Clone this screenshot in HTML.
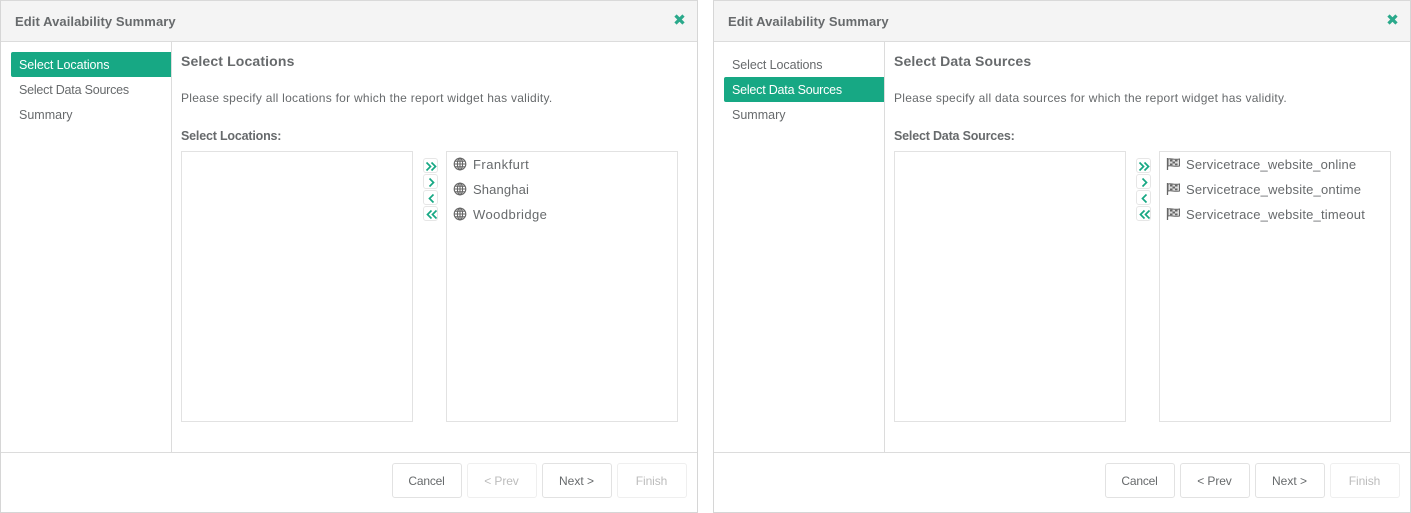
<!DOCTYPE html>
<html><head><meta charset="utf-8"><style>
html,body{margin:0;padding:0;background:#fff}
body{width:1411px;height:513px;position:relative;overflow:hidden;font-family:"Liberation Sans",sans-serif;color:#676a6c}
.d{position:absolute;top:0;width:698px;height:513px;box-sizing:border-box;border:1px solid #d6d6d6;border-top-color:#d9d9d9;background:#fff;overflow:hidden}
.a{position:absolute;white-space:nowrap;line-height:16px}
.hd{left:0;top:0;width:696px;height:40px;background:#f4f4f4;border-bottom:1px solid #dcdcdc}
.t{left:14px;top:12px;font-size:13px;font-weight:bold;color:#676a6c;letter-spacing:.08px;margin-top:1px}
.side{left:170px;top:41px;width:1px;height:410px;background:#dcdcdc}
.foot{left:0;top:451px;width:696px;height:1px;background:#dcdcdc}
.nav{left:10px;width:160px;height:25px;line-height:27px;font-size:12.5px;box-sizing:border-box;padding-left:8px;border-radius:2px 0 0 2px}
.on{background:#17a884;color:#fff}
.h{left:180px;top:52px;font-size:14px;font-weight:bold;letter-spacing:.14px}
.p{left:180px;top:89px;font-size:12px;letter-spacing:.27px}
.l{left:180px;top:127px;font-size:12.5px;font-weight:bold;letter-spacing:-.19px}
.box{top:150px;width:232px;height:271px;box-sizing:border-box;border:1px solid #e2e2e2;background:#fff}
.sb{left:422px;width:15px;height:15px;box-sizing:border-box;border:1px solid #e6e6e6;border-radius:3px;background:#fff}
.sb svg{position:absolute;left:.5px;top:1px}
.it{left:472px;font-size:13px}
.ic{left:452px}
.b{top:462px;width:70px;height:35px;box-sizing:border-box;border:1px solid #e2e2e2;border-radius:3px;text-align:center;line-height:34px;font-size:12px;color:#676a6c;background:#fff;text-indent:-1px}
.dis{color:#bcbcbc;border-color:#efefef}
</style></head><body>

<div class="d" style="left:0">
<div class="a hd"></div><div class="a t">Edit Availability Summary</div>
<svg class="a" style="left:672px;top:11.500px" width="13" height="13" viewBox="0 0 13 13"><path d="M2.500 2.500L10.500 10.500M10.500 2.500L2.500 10.500" stroke="#2aa98b" stroke-width="3.200"/></svg>
<div class="a side"></div><div class="a foot"></div>
<div class="a nav on" style="top:51px;letter-spacing:-.08px">Select Locations</div>
<div class="a nav" style="top:76px;letter-spacing:-.21px">Select Data Sources</div>
<div class="a nav" style="top:101px">Summary</div>
<div class="a h">Select Locations</div>
<div class="a p">Please specify all locations for which the report widget has validity.</div>
<div class="a l">Select Locations:</div>
<div class="a box" style="left:180px"></div>
<div class="a box" style="left:445px"></div>
<div class="a sb" style="top:157px"><svg width="13" height="13" viewBox="0 0 13 13"><path d="M1.500 2.500L5.500 6.500L1.500 10.500M6.500 2.500L10.500 6.500L6.500 10.500" fill="none" stroke="#17a884" stroke-width="1.700"/></svg></div>
<div class="a sb" style="top:173px"><svg width="13" height="13" viewBox="0 0 13 13"><path d="M4.500 2.500L8.500 6.500L4.500 10.500" fill="none" stroke="#17a884" stroke-width="1.700"/></svg></div>
<div class="a sb" style="top:189px"><svg width="13" height="13" viewBox="0 0 13 13"><path d="M8.500 2.500L4.500 6.500L8.500 10.500" fill="none" stroke="#17a884" stroke-width="1.700"/></svg></div>
<div class="a sb" style="top:205px"><svg width="13" height="13" viewBox="0 0 13 13"><path d="M6.500 2.500L2.500 6.500L6.500 10.500M11.500 2.500L7.500 6.500L11.500 10.500" fill="none" stroke="#17a884" stroke-width="1.700"/></svg></div>
<svg class="a ic" style="top:156px" width="14" height="14" viewBox="0 0 14 14"><g fill="none" stroke="#666" stroke-width="1.100"><circle cx="7" cy="7" r="5.800"/><ellipse cx="7" cy="7" rx="2.600" ry="5.800"/><path d="M7 1.200V12.800M1.200 7H12.800M2 4.200H12M2 9.800H12"/></g></svg>
<svg class="a ic" style="top:181px" width="14" height="14" viewBox="0 0 14 14"><g fill="none" stroke="#666" stroke-width="1.100"><circle cx="7" cy="7" r="5.800"/><ellipse cx="7" cy="7" rx="2.600" ry="5.800"/><path d="M7 1.200V12.800M1.200 7H12.800M2 4.200H12M2 9.800H12"/></g></svg>
<svg class="a ic" style="top:206px" width="14" height="14" viewBox="0 0 14 14"><g fill="none" stroke="#666" stroke-width="1.100"><circle cx="7" cy="7" r="5.800"/><ellipse cx="7" cy="7" rx="2.600" ry="5.800"/><path d="M7 1.200V12.800M1.200 7H12.800M2 4.200H12M2 9.800H12"/></g></svg>
<div class="a it" style="top:156px;letter-spacing:.47px">Frankfurt</div>
<div class="a it" style="top:181px;letter-spacing:.13px">Shanghai</div>
<div class="a it" style="top:206px;letter-spacing:.45px">Woodbridge</div>
<div class="a b" style="left:391px;letter-spacing:-.2px">Cancel</div>
<div class="a b dis" style="left:466px;letter-spacing:-.1px">&lt; Prev</div>
<div class="a b" style="left:541px">Next &gt;</div>
<div class="a b dis" style="left:616px;letter-spacing:-.1px">Finish</div>
</div>

<div class="d" style="left:713px">
<div class="a hd"></div><div class="a t">Edit Availability Summary</div>
<svg class="a" style="left:672px;top:11.500px" width="13" height="13" viewBox="0 0 13 13"><path d="M2.500 2.500L10.500 10.500M10.500 2.500L2.500 10.500" stroke="#2aa98b" stroke-width="3.200"/></svg>
<div class="a side"></div><div class="a foot"></div>
<div class="a nav" style="top:51px;letter-spacing:-.08px">Select Locations</div>
<div class="a nav on" style="top:76px;letter-spacing:-.21px">Select Data Sources</div>
<div class="a nav" style="top:101px">Summary</div>
<div class="a h">Select Data Sources</div>
<div class="a p" style="letter-spacing:.26px">Please specify all data sources for which the report widget has validity.</div>
<div class="a l">Select Data Sources:</div>
<div class="a box" style="left:180px"></div>
<div class="a box" style="left:445px"></div>
<div class="a sb" style="top:157px"><svg width="13" height="13" viewBox="0 0 13 13"><path d="M1.500 2.500L5.500 6.500L1.500 10.500M6.500 2.500L10.500 6.500L6.500 10.500" fill="none" stroke="#17a884" stroke-width="1.700"/></svg></div>
<div class="a sb" style="top:173px"><svg width="13" height="13" viewBox="0 0 13 13"><path d="M4.500 2.500L8.500 6.500L4.500 10.500" fill="none" stroke="#17a884" stroke-width="1.700"/></svg></div>
<div class="a sb" style="top:189px"><svg width="13" height="13" viewBox="0 0 13 13"><path d="M8.500 2.500L4.500 6.500L8.500 10.500" fill="none" stroke="#17a884" stroke-width="1.700"/></svg></div>
<div class="a sb" style="top:205px"><svg width="13" height="13" viewBox="0 0 13 13"><path d="M6.500 2.500L2.500 6.500L6.500 10.500M11.500 2.500L7.500 6.500L11.500 10.500" fill="none" stroke="#17a884" stroke-width="1.700"/></svg></div>
<svg class="a ic" style="top:156px" width="15" height="14" viewBox="0 0 15 14"><path d="M1.500 1V13" stroke="#666" stroke-width="1.300"/><path d="M2 2C5 .8 8 3.200 13.500 2V9C8 10.200 5 7.800 2 9Z" fill="#ddd" stroke="#666" stroke-width="1"/><path d="M4 2.500H6.500V4.500H9V6.500H11.500V8.300H9V6.500H6.500V4.500H4ZM9 2.800H11.500V4.500H9ZM4 6.500H6.500V8.300H4Z" fill="#666"/></svg>
<svg class="a ic" style="top:181px" width="15" height="14" viewBox="0 0 15 14"><path d="M1.500 1V13" stroke="#666" stroke-width="1.300"/><path d="M2 2C5 .8 8 3.200 13.500 2V9C8 10.200 5 7.800 2 9Z" fill="#ddd" stroke="#666" stroke-width="1"/><path d="M4 2.500H6.500V4.500H9V6.500H11.500V8.300H9V6.500H6.500V4.500H4ZM9 2.800H11.500V4.500H9ZM4 6.500H6.500V8.300H4Z" fill="#666"/></svg>
<svg class="a ic" style="top:206px" width="15" height="14" viewBox="0 0 15 14"><path d="M1.500 1V13" stroke="#666" stroke-width="1.300"/><path d="M2 2C5 .8 8 3.200 13.500 2V9C8 10.200 5 7.800 2 9Z" fill="#ddd" stroke="#666" stroke-width="1"/><path d="M4 2.500H6.500V4.500H9V6.500H11.500V8.300H9V6.500H6.500V4.500H4ZM9 2.800H11.500V4.500H9ZM4 6.500H6.500V8.300H4Z" fill="#666"/></svg>
<div class="a it" style="top:156px;letter-spacing:.18px">Servicetrace_website_online</div>
<div class="a it" style="top:181px;letter-spacing:.2px">Servicetrace_website_ontime</div>
<div class="a it" style="top:206px;letter-spacing:.2px">Servicetrace_website_timeout</div>
<div class="a b" style="left:391px;letter-spacing:-.2px">Cancel</div>
<div class="a b" style="left:466px;letter-spacing:-.1px">&lt; Prev</div>
<div class="a b" style="left:541px">Next &gt;</div>
<div class="a b dis" style="left:616px;letter-spacing:-.1px">Finish</div>
</div>
</body></html>
